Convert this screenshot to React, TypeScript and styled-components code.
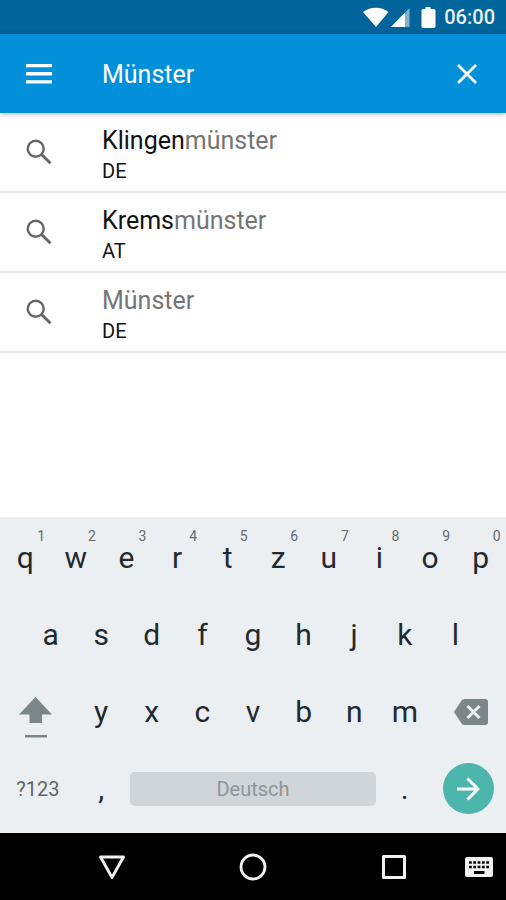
import React, { useState } from "react";
import styled, { createGlobalStyle } from "styled-components";

const GlobalStyle = createGlobalStyle`
  * { box-sizing: border-box; }
  body { margin: 0; background: #fff; font-family: Roboto, "Liberation Sans", sans-serif; }
  button { border: 0; margin: 0; padding: 0; background: none; font: inherit; color: inherit; cursor: pointer; }
  svg { display: block; }
`;

const Screen = styled.div`
  display: flex;
  flex-direction: column;
  min-height: 100vh;
  background: #fff;
`;

const StatusBar = styled.div`
  display: flex;
  align-items: center;
  justify-content: flex-end;
  height: 34px;
  padding-right: 11px;
  background: #01649a;
  color: #fff;
`;

const Clock = styled.time`
  margin-left: 6px;
  font-size: 20px;
  line-height: 36px;
  font-weight: 500;
  color: #e9f3f8;
`;

const AppBar = styled.header`
  display: flex;
  align-items: center;
  height: 79px;
  background: #0290da;
  color: #fff;
  box-shadow: 0 1px 5px rgba(0, 0, 0, 0.3);
  z-index: 1;
`;

const BarButton = styled.button`
  display: flex;
  flex: none;
  align-items: center;
  justify-content: center;
  width: 78px;
  height: 79px;
`;

const SearchInput = styled.input`
  flex: 1;
  min-width: 0;
  height: 48px;
  margin-left: 24px;
  padding: 2px 0 0;
  border: 0;
  outline: 0;
  background: transparent;
  color: #fff;
  font-family: inherit;
  font-size: 25px;
`;

const Results = styled.ul`
  flex: 1;
  margin: 0;
  padding: 0;
  list-style: none;
`;

const ResultItem = styled.li`
  border-bottom: 2px solid #e8e8e8;
`;

const ResultButton = styled.button`
  display: flex;
  align-items: center;
  width: 100%;
  height: 78px;
  text-align: left;
`;

const ResultIcon = styled.span`
  display: flex;
  flex: none;
  justify-content: center;
  width: 78px;
  margin-right: 24px;
  color: #666;
`;

const ResultText = styled.span`
  display: flex;
  flex-direction: column;
  padding-top: 5px;
  color: #111;
`;

const City = styled.span`
  font-size: 25px;
  line-height: 32px;
`;

const Match = styled.span`
  color: #757575;
`;

const Country = styled.span`
  font-size: 20px;
  line-height: 28px;
`;

const Keyboard = styled.section`
  padding: 2px 0 6px;
  background: #eceff1;
  color: #1f2b31;
`;

const KeyRow = styled.div<{ $inset?: boolean }>`
  display: grid;
  grid-template-columns: repeat(${(p) => (p.$inset ? 18 : 20)}, minmax(0, 1fr));
  height: 77px;
  padding: 0 ${(p) => (p.$inset ? "5%" : "0")};
`;

const Key = styled.button<{ $span?: number }>`
  position: relative;
  display: flex;
  align-items: center;
  justify-content: center;
  grid-column: span ${(p) => p.$span ?? 2};
  font-size: 30px;
  line-height: 36px;
`;

const Hint = styled.span`
  position: absolute;
  top: 8px;
  left: 50%;
  width: 32px;
  text-align: center;
  font-size: 14px;
  line-height: 18px;
  color: #666b6e;
`;

const SmallKey = styled(Key)`
  font-size: 20px;
  color: #5f6669;
`;

const ShiftKey = styled(Key)`
  padding: 12px 4px 0 0;
  color: #7b8689;
`;

const DeleteKey = styled(Key)`
  justify-content: flex-end;
  padding-right: 18px;
  color: #7b8689;
`;

const SpaceKey = styled(Key)`
  align-self: center;
  height: 34px;
  margin: 0 4px;
  border-radius: 5px;
  background: #cfd5d8;
  color: #8f9699;
  font-size: 20px;
`;

const GoKey = styled(Key)`
  justify-content: flex-end;
  padding-right: 12px;
`;

const GoCircle = styled.span`
  display: flex;
  align-items: center;
  justify-content: center;
  width: 51px;
  height: 51px;
  border-radius: 50%;
  background: #4db6ac;
  color: #fff;
`;

const NavBar = styled.nav`
  display: grid;
  grid-template-columns: 1fr 141px 141px 141px 1fr;
  align-items: center;
  height: 67px;
  background: #000;
  color: #f2f2f2;
`;

const NavButton = styled.button<{ $column: number }>`
  display: flex;
  grid-column: ${(p) => p.$column};
  align-items: center;
  justify-content: center;
  height: 67px;
`;

const SwitchButton = styled(NavButton)`
  justify-content: flex-end;
  padding-right: 13px;
`;

const results = [
  { id: 1, prefix: "Klingen", match: "münster", country: "DE" },
  { id: 2, prefix: "Krems", match: "münster", country: "AT" },
  { id: 3, prefix: "", match: "Münster", country: "DE" },
];

const topRow = "qwertzuiop".split("");
const homeRow = "asdfghjkl".split("");
const bottomRow = "yxcvbnm".split("");

const StatusIcons = () => (
  <svg width="75" height="22" viewBox="0 0 75 22" fill="currentColor" aria-hidden="true">
    <path d="M0 6C7.500.2 18.200.2 25.500 6L13 21Z" />
    <path d="M46.500 2v19H28Z" opacity=".5" />
    <path d="M42 6.600V21H28Z" />
    <path d="M62.500 1h5v2h3.500q1.500 0 1.500 1.500V20q0 2-1.500 2H60q-1.500 0-1.500-2V4.500Q58.500 3 60 3h2.500Z" />
  </svg>
);

const SearchIcon = () => (
  <svg width="26" height="26" viewBox="0 0 26 26" fill="none" stroke="currentColor" aria-hidden="true">
    <circle cx="9.700" cy="9.700" r="8" strokeWidth="2.400" />
    <path d="m15.500 15.500 9 8.800" strokeWidth="3" />
  </svg>
);

export default function App() {
  const [query, setQuery] = useState("Münster");
  const type = (key: string) => setQuery((value) => value + key);

  return (
    <Screen>
      <GlobalStyle />
      <StatusBar>
        <StatusIcons />
        <Clock>06:00</Clock>
      </StatusBar>
      <AppBar>
        <BarButton aria-label="Menü">
          <svg width="26" height="20" viewBox="0 0 26 20" fill="currentColor" aria-hidden="true">
            <path d="M0 0h26v3.300H0zM0 8.100h26v3.300H0zM0 16.200h26v3.300H0z" />
          </svg>
        </BarButton>
        <SearchInput aria-label="Ort suchen" value={query} onChange={(e) => setQuery(e.target.value)} />
        <BarButton aria-label="Eingabe löschen" onClick={() => setQuery("")}>
          <svg width="20" height="20" viewBox="0 0 20 20" fill="none" stroke="currentColor" strokeWidth="2.700" aria-hidden="true">
            <path d="m1 1 18 18M19 1 1 19" />
          </svg>
        </BarButton>
      </AppBar>
      <Results>
        {results.map((r) => (
          <ResultItem key={r.id}>
            <ResultButton onClick={() => setQuery(r.prefix + r.match)}>
              <ResultIcon><SearchIcon /></ResultIcon>
              <ResultText>
                <City>{r.prefix}<Match>{r.match}</Match></City>
                <Country>{r.country}</Country>
              </ResultText>
            </ResultButton>
          </ResultItem>
        ))}
      </Results>
      <Keyboard aria-label="Tastatur">
        <KeyRow>
          {topRow.map((k, i) => (
            <Key key={k} onClick={() => type(k)}>{k}<Hint>{(i + 1) % 10}</Hint></Key>
          ))}
        </KeyRow>
        <KeyRow $inset>
          {homeRow.map((k) => <Key key={k} onClick={() => type(k)}>{k}</Key>)}
        </KeyRow>
        <KeyRow>
          <ShiftKey $span={3} aria-label="Umschalttaste">
            <svg width="34" height="42" viewBox="0 0 34 42" fill="currentColor" aria-hidden="true">
              <path d="M16.500 0 33 17.500H23V26H10.500V17.500H0ZM6 38h22v2.600H6z" />
            </svg>
          </ShiftKey>
          {bottomRow.map((k) => <Key key={k} onClick={() => type(k)}>{k}</Key>)}
          <DeleteKey $span={3} aria-label="Löschen" onClick={() => setQuery((v) => v.slice(0, -1))}>
            <svg width="34" height="26" viewBox="0 0 34 26" aria-hidden="true">
              <path d="M0 13 7.500 1.500Q8.500 0 10.500 0H31q3 0 3 3v20q0 3-3 3H10.500q-2 0-3-1.500Z" fill="currentColor" />
              <path d="m13.500 7 12 12m0-12-12 12" stroke="#eceff1" strokeWidth="3" />
            </svg>
          </DeleteKey>
        </KeyRow>
        <KeyRow>
          <SmallKey $span={3}>?123</SmallKey>
          <Key onClick={() => type(",")}>,</Key>
          <SpaceKey $span={10} onClick={() => type(" ")}>Deutsch</SpaceKey>
          <Key onClick={() => type(".")}>.</Key>
          <GoKey $span={3} aria-label="Weiter">
            <GoCircle>
              <svg width="24" height="24" viewBox="0 0 24 24" fill="none" stroke="currentColor" strokeWidth="3" aria-hidden="true">
                <path d="M1 12h20M11.500 1.500 22 12 11.500 22.500" />
              </svg>
            </GoCircle>
          </GoKey>
        </KeyRow>
      </Keyboard>
      <NavBar>
        <NavButton $column={2} aria-label="Tastatur schließen">
          <svg width="28" height="26" viewBox="0 0 28 26" fill="none" stroke="currentColor" strokeWidth="2.800" strokeLinejoin="round" aria-hidden="true">
            <path d="M2.500 3h23L14 23.500Z" />
          </svg>
        </NavButton>
        <NavButton $column={3} aria-label="Startseite">
          <svg width="28" height="28" viewBox="0 0 28 28" fill="none" stroke="currentColor" strokeWidth="2.800" aria-hidden="true">
            <circle cx="14" cy="14" r="12" />
          </svg>
        </NavButton>
        <NavButton $column={4} aria-label="Übersicht">
          <svg width="26" height="26" viewBox="0 0 26 26" fill="none" stroke="currentColor" strokeWidth="3" strokeLinejoin="round" aria-hidden="true">
            <path d="M2.500 2.500h21v21h-21z" />
          </svg>
        </NavButton>
        <SwitchButton $column={5} aria-label="Tastatur wechseln">
          <svg width="28" height="20" viewBox="0 0 28 20" aria-hidden="true">
            <rect width="28" height="20" rx="2" fill="currentColor" />
            <path d="M4 5.500h20M4 10h20" stroke="#000" strokeWidth="2.500" strokeDasharray="2.800 1.500" />
            <path d="M9 15.500h10.500" stroke="#000" strokeWidth="3" />
          </svg>
        </SwitchButton>
      </NavBar>
    </Screen>
  );
}
